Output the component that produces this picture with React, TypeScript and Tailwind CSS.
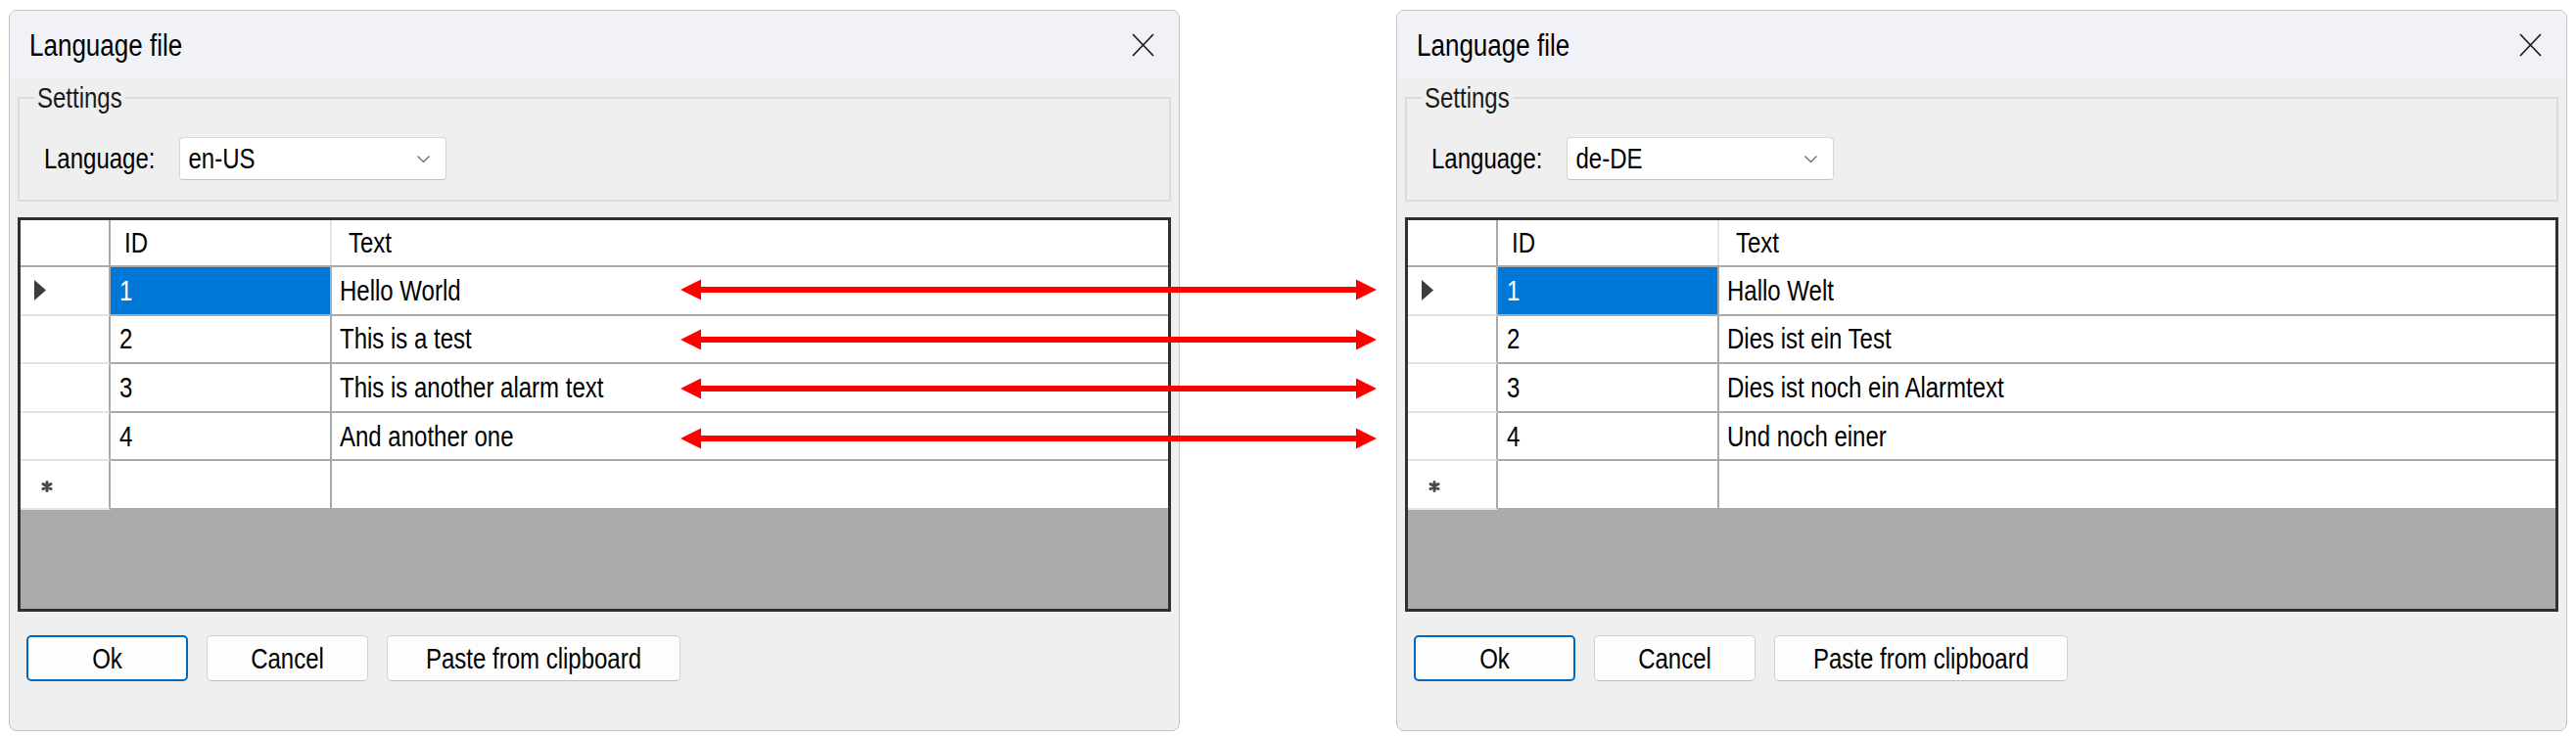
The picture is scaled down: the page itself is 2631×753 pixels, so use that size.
import React from "react"

type Row = { id: string; text: string }

const english: Row[] = [
  { id: "1", text: "Hello World" },
  { id: "2", text: "This is a test" },
  { id: "3", text: "This is another alarm text" },
  { id: "4", text: "And another one" },
]

const german: Row[] = [
  { id: "1", text: "Hallo Welt" },
  { id: "2", text: "Dies ist ein Test" },
  { id: "3", text: "Dies ist noch ein Alarmtext" },
  { id: "4", text: "Und noch einer" },
]

const Label = ({ children, className = "" }: { children: React.ReactNode; className?: string }) => (
  <span className={`inline-block scale-y-120 whitespace-nowrap ${className}`}>{children}</span>
)

const GridRow = ({ row, selected }: { row?: Row; selected?: boolean }) => (
  <div className="flex h-[49.6px] shrink-0 border-b-2 border-[#a9a9a9] last:border-b-0">
    <div className="w-[92px] shrink-0 flex items-center pl-[14px] border-r-2 border-[#a9a9a9] -mb-[2px] border-b-2 border-b-[#e3e3e3] bg-white">
      {selected && (
        <svg width="12" height="21" viewBox="0 0 12 21">
          <polygon points="0,0 12,10.5 0,21" fill="#3c3c3c" />
        </svg>
      )}
      {!row && (
        <svg width="12" height="12" viewBox="0 0 12 12" className="ml-[7px] mt-[4px]">
          <path d="M6 1.5V10.5M2 3.5L10 8.5M10 3.5L2 8.5" stroke="#4a4a4a" strokeWidth="3" strokeLinecap="round" />
        </svg>
      )}
    </div>
    <div
      className={`w-[226px] shrink-0 flex items-center pl-[9px] border-r-2 border-[#a9a9a9] ${
        selected ? "bg-[#0078d7] text-white" : "bg-white text-black"
      }`}
    >
      {row && <Label>{row.id}</Label>}
    </div>
    <div className="flex-1 flex items-center pl-[8px] bg-white text-black">
      {row && <Label>{row.text}</Label>}
    </div>
  </div>
)

const Dialog = ({ lang, rows }: { lang: string; rows: Row[] }) => (
  <div className="w-[1196px] h-[737px] shrink-0 flex flex-col overflow-hidden rounded-[8px] border border-[#c3c3c3] bg-[#efefef] text-[24px] leading-[28px] text-black">
    <div className="h-[69px] shrink-0 flex items-center justify-between pl-[20px] pr-[25px] bg-[#f0f2f8]">
      <Label className="text-[26px]">Language file</Label>
      <svg width="23" height="24" viewBox="0 0 23 24">
        <path d="M1 1L22 23M22 1L1 23" stroke="#1b1b1b" strokeWidth="1.7" />
      </svg>
    </div>

    <div className="flex-1 flex flex-col px-[8px]">
      <fieldset className="mt-[6px] h-[120px] border-2 border-[#dcdcdc] pl-[15px]">
        <legend className="px-[3px] text-[#1a1a1a]">
          <Label>Settings</Label>
        </legend>
        <div className="flex items-center mt-[26px] ml-[10px]">
          <Label>Language:</Label>
          <div className="ml-[25px] w-[273px] h-[44px] flex items-center justify-between pl-[8px] pr-[16px] bg-white border border-[#d6d6d6] border-b-[#c4c4c4] rounded-[4px]">
            <Label>{lang}</Label>
            <svg width="13" height="7" viewBox="0 0 13 7">
              <polyline points="0.5,0.5 6.5,6.5 12.5,0.5" fill="none" stroke="#6a6a6a" strokeWidth="1.3" />
            </svg>
          </div>
        </div>
      </fieldset>

      <div className="mt-[16px] h-[403px] flex flex-col border-[3px] border-[#303030]">
        <div className="flex h-[48px] shrink-0 border-b-2 border-[#a9a9a9] bg-white">
          <div className="w-[92px] shrink-0 border-r-2 border-[#a9a9a9]" />
          <div className="w-[226px] shrink-0 flex items-center pl-[14px] border-r-2 border-[#e6e6e6]">
            <Label>ID</Label>
          </div>
          <div className="flex-1 flex items-center pl-[17px]">
            <Label>Text</Label>
          </div>
        </div>
        {rows.map((row, i) => (
          <GridRow key={row.id} row={row} selected={i === 0} />
        ))}
        <GridRow />
        <div className="flex-1 bg-[#ababab]" />
      </div>

      <div className="flex gap-[19px] mt-[24px] pl-[9px]">
        <button className="w-[165px] h-[47px] rounded-[5px] border-2 border-[#0067c0] bg-[#fdfdfd]">
          <Label>Ok</Label>
        </button>
        <button className="w-[165px] h-[47px] rounded-[5px] border border-[#d0d0d0] border-b-[#bdbdbd] bg-[#fdfdfd]">
          <Label>Cancel</Label>
        </button>
        <button className="w-[300px] h-[47px] rounded-[5px] border border-[#d0d0d0] border-b-[#bdbdbd] bg-[#fdfdfd]">
          <Label>Paste from clipboard</Label>
        </button>
      </div>
    </div>
  </div>
)

const arrowRows = [296, 347, 397, 448]

export default function App() {
  return (
    <div className="relative w-[2631px] h-[753px] bg-white flex items-start gap-[221px] pl-[9px] pt-[10px] font-['Liberation_Sans',Arial,sans-serif]">
      <Dialog lang="en-US" rows={english} />
      <Dialog lang="de-DE" rows={german} />

      {/* mapping arrows drawn over both grids */}
      <svg className="absolute left-0 top-0 pointer-events-none" width="2631" height="753">
        {arrowRows.map((y) => (
          <g key={y} fill="#ff0000">
            <rect x="712" y={y - 3} width="676" height="6" />
            <polygon points={`695,${y} 716,${y - 10.5} 716,${y + 10.5}`} />
            <polygon points={`1406,${y} 1385,${y - 10.5} 1385,${y + 10.5}`} />
          </g>
        ))}
      </svg>
    </div>
  )
}
